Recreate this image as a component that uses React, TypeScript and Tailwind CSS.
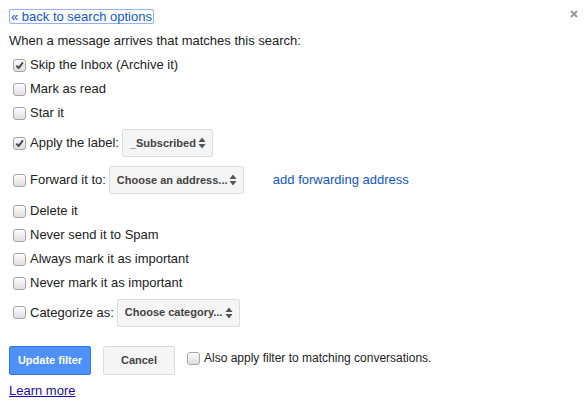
import * as React from 'react';

function Checkbox({ checked = false }: { checked?: boolean }) {
  return (
    <span className="relative inline-flex h-[13px] w-[13px] shrink-0 items-center justify-center rounded-[3px] border border-[#a6a6a6] bg-gradient-to-b from-[#fdfdfd] to-[#dedede]">
      {checked && (
        <svg className="h-[9px] w-[9px]" viewBox="0 0 10 10" aria-hidden="true">
          <path d="M1.5 5.2 L4 7.8 L8.8 1.6" fill="none" stroke="#4a4a4a" strokeWidth={2.2} strokeLinejoin="round" />
        </svg>
      )}
    </span>
  );
}

function SelectBox({ label, width }: { label: string; width: string }) {
  return (
    <div
      className={`flex h-[28px] items-center justify-between rounded-[2px] border border-[#dcdcdc] bg-[#f5f5f5] pl-[7px] pr-[6px] text-[11px] font-bold text-[#444] ${width}`}
    >
      <span>{label}</span>
      <svg className="h-[12px] w-[8px]" viewBox="0 0 8 12" aria-hidden="true">
        <path d="M4 0.5 L7.5 5 L0.5 5 Z" fill="#555" />
        <path d="M4 11.5 L7.5 7 L0.5 7 Z" fill="#555" />
      </svg>
    </div>
  );
}

function Row({ checked, children, className = '' }: { checked?: boolean; children: React.ReactNode; className?: string }) {
  return (
    <div className={`flex items-center pl-[4px] ${className}`}>
      <Checkbox checked={checked} />
      <span className="ml-[4px] flex items-center">{children}</span>
    </div>
  );
}

export default function App() {
  return (
    <div className="relative h-[409px] w-[588px] bg-white pl-[9px] text-[13px] text-[#222] [font-family:'Liberation_Sans',Arial,sans-serif]">
      <button type="button" className="absolute right-[10px] top-[10px] flex" aria-label="Close">
        <svg className="h-[8px] w-[8px]" viewBox="0 0 8 8" aria-hidden="true">
          <path d="M1 1 L7 7 M7 1 L1 7" stroke="#9a9a9a" strokeWidth={2} />
        </svg>
      </button>

      <div className="flex pt-[9px]">
        <a className="block h-[15px] rounded-[2px] border border-[#8fb4f7] px-[1px] leading-[13px] text-[#15c]">
          « back to search options
        </a>
      </div>

      <div className="mt-[5px] flex h-6 items-center">When a message arrives that matches this search:</div>

      <Row checked className="h-6">Skip the Inbox (Archive it)</Row>
      <Row className="h-6">Mark as read</Row>
      <Row className="h-6">Star it</Row>

      <Row checked className="mt-[4px] h-[28px]">
        Apply the label:
        <span className="ml-[3px]">
          <SelectBox label="_Subscribed" width="w-[91px]" />
        </span>
      </Row>

      <div className="mt-[9px] flex h-[28px] items-center">
        <Row>
          Forward it to:
          <span className="ml-[3px]">
            <SelectBox label="Choose an address..." width="w-[135px]" />
          </span>
        </Row>
        <a className="ml-[29px] text-[#15c]">add forwarding address</a>
      </div>

      <Row className="mt-[5px] h-6">Delete it</Row>
      <Row className="h-6">Never send it to Spam</Row>
      <Row className="h-6">Always mark it as important</Row>
      <Row className="h-6">Never mark it as important</Row>

      <Row className="mt-[3px] h-[29px]">
        Categorize as:
        <span className="ml-[3px]">
          <SelectBox label="Choose category..." width="w-[123px]" />
        </span>
      </Row>

      <div className="mt-[19px] flex items-start">
        <button
          type="button"
          className="h-[29px] w-[82px] rounded-[2px] border border-[#3079ed] bg-[#4d90fe] text-[11px] font-bold text-white"
        >
          Update filter
        </button>
        <button
          type="button"
          className="ml-[12px] h-[29px] w-[72px] rounded-[2px] border border-[#dcdcdc] bg-[#f5f5f5] text-[11px] font-bold text-[#444]"
        >
          Cancel
        </button>
        <div className="ml-[12px] mt-[3px] flex items-center">
          <Checkbox />
          <span className="ml-[4px] text-[12px]">Also apply filter to matching conversations.</span>
        </div>
      </div>

      <div className="mt-[6px] flex">
        <a className="text-[#1a0dab] underline">Learn more</a>
      </div>
    </div>
  );
}
